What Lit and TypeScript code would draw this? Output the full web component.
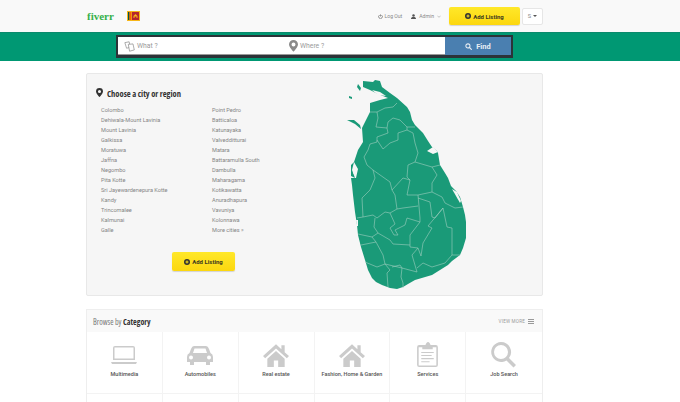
import { LitElement, html, css, svg } from 'lit';
import { customElement } from 'lit/decorators.js';

const left = ['Colombo', 'Dehiwala-Mount Lavinia', 'Mount Lavinia', 'Galkissa', 'Moratuwa', 'Jaffna', 'Negombo', 'Pita Kotte', 'Sri Jayewardenepura Kotte', 'Kandy', 'Trincomalee', 'Kalmunai', 'Galle'];
const right = ['Point Pedro', 'Batticaloa', 'Katunayaka', 'Valvedditturai', 'Matara', 'Battaramulla South', 'Dambulla', 'Maharagama', 'Kotikawatta', 'Anuradhapura', 'Vavuniya', 'Kolonnawa', 'More cities »'];

const house = svg`<path d="M12 2 L0 13 L2 15 L12 6 L22 15 L24 13 L20 9.5 V3 H17 V6.6 Z M4 15.5 V23 H10 V17 H14 V23 H20 V15.5 L12 8.2 Z"/>`;

const icons: Record<string, unknown> = {
  laptop: svg`<path fill-rule="evenodd" d="M4 2 H22 Q24 2 24 4 V16 H2 V4 Q2 2 4 2 Z M3.5 3.5 V14.5 H22.5 V3.5 Z M0 18 H26 L25 20 H1 Z"/>`,
  car: svg`<path fill-rule="evenodd" d="M7 2 H19 Q21 2 22 5 L23.5 9 Q26 10 26 13 V18 H23 V21 H19 V18 H7 V21 H3 V18 H0 V13 Q0 10 2.500 9 L4 5 Q5 2 7 2 Z M7.500 4.500 L6 9 H20 L18.500 4.500 Z M4 11.500 A2 2 0 1 0 4 15.500 A2 2 0 1 0 4 11.500 Z M22 11.500 A2 2 0 1 0 22 15.500 A2 2 0 1 0 22 11.500 Z"/>`,
  house,
  clip: svg`<path fill-rule="evenodd" d="M2 3 H8 L9 1 Q10.500 -1 12 1 L13 3 H18 Q20 3 20 5 V22 Q20 24 18 24 H2 Q0 24 0 22 V5 Q0 3 2 3 Z M1.500 5 V22.500 H18.500 V5 H15 V7 H5 V5 Z M4 9.500 H16 V10.500 H4 Z M4 12.500 H14 V13.500 H4 Z M4 15.500 H16 V16.500 H4 Z M4 18.500 H12 V19.500 H4 Z"/>`,
  search: svg`<path fill-rule="evenodd" d="M10 0 A10 10 0 0 1 18 16 L25 23 L22.500 25.500 L15.500 18.500 A10 10 0 1 1 10 0 Z M10 3 A7 7 0 1 0 10 17 A7 7 0 1 0 10 3 Z"/>`,
};

const cats = [
  { n: 'Multimedia', i: 'laptop', w: 26, vb: '0 0 26 22' },
  { n: 'Automobiles', i: 'car', w: 26, vb: '0 0 26 22' },
  { n: 'Real estate', i: 'house', w: 26, vb: '0 0 24 24' },
  { n: 'Fashion, Home & Garden', i: 'house', w: 26, vb: '0 0 24 24' },
  { n: 'Services', i: 'clip', w: 21, vb: '0 0 20 25' },
  { n: 'Job Search', i: 'search', w: 26, vb: '0 0 26 26' },
];

const borders = [
  'M370 112 377 112 385 108 393 107 397 103',
  'M377 112 378 118 376 127 387 128 388 122 393 118 400 120 407 127 415 127',
  'M387 128 388 133 377 137 377 142 370 144',
  'M377 140 383 149 390 143 398 140 398 133 407 130 407 127',
  'M407 130 413 133 415 143 418 153 415 162 408 165 407 177 410 180 408 190 407 195',
  'M370 144 368 150 364 157 367 165 373 170 390 182 392 190 395 195 397 209',
  'M373 170 375 178 370 190 362 198 363 217 357 218',
  'M415 162 432 167 440 165',
  'M432 167 437 175 432 183 432 192',
  'M392 190 403 178 410 180',
  'M363 217 373 215 377 218 385 212 390 213 397 209 403 208 418 206',
  'M407 195 418 195 432 192 442 197 445 203 455 208 463 207',
  'M418 195 420 218 420 222 410 235 410 247 418 248 421 256 423 243 432 228 428 226 443 208 447 227 452 228 452 255 460 255',
  'M418 198 430 202 432 217 435 218 443 208',
  'M420 222 407 218 405 225 395 230 398 235 394 235 390 228 395 224 390 213',
  'M375 218 374 227 378 233 390 240 393 244 410 245',
  'M358 234 372 237 378 233',
  'M361 245 376 242 372 237',
  'M376 242 383 255 385 264 402 268 417 272 412 255 418 248',
  'M417 268 423 263 432 267 445 263 452 255',
  'M365 262 377 267 385 264 390 270 387 273 388 287',
  'M392 267 400 265 402 268 401 277 403 283 403 288',
];

const mapShape = svg`
  <path class="land" d="M363 81 373 82 375 80 380 81 382 87 390 93 397 98 407 107 410 112 412 120 415 125 423 133 428 141 432 147 437 151 438 153 440 165 445 173 448 178 451 186 456 191 460 197 463 207 465 215 466 222 466 238 463 248 460 255 452 261 448 265 440 270 432 275 415 280 408 284 403 287 397 289 390 288 382 285 376 282 372 278 368 270 365 260 361 247 358 235 357 225 355 212 353 195 352 185 351 178 356 178 358 169 354 162 358 150 363 142 362 128 366 120 370 112 370 103 380 100 388 98 378 94 370 90 363 87Z"/>
  <path class="land" d="M349 96 352 97 352 99 349 98Z M358 84 361 88 360 91 357 87Z M347 120 354 120 360 125 361 129 355 124Z M351 165 354 162 352 170 355 178 351 176Z"/>
  <path class="gap" d="M353 173 355 165 356 176Z"/>
  <path class="gap" d="M372 90 380 92 386 96 378 95Z"/>
  <path class="gap" d="M427 151 433 147 438 152 433 154Z"/>
  <path class="gap" d="M452 189 457 192 461 201 460 203 456 196Z"/>
  <path class="gap" d="M356 220 358 220 358 226 357 226Z"/>
  ${borders.map(d => svg`<path class="line" d=${d}/>`)}
`;

@customElement('app-root')
export class AppRoot extends LitElement {
  static styles = css`
    :host {
      display: block;
      width: 680px;
      height: 402px;
      overflow: hidden;
      background: #fff;
      font-family: Roboto, "Liberation Sans", sans-serif;
      color: #666;
    }
    .top {
      height: 32px;
      background: #f9f9f9;
      display: flex;
      align-items: center;
      padding: 0 137px 0 87px;
    }
    .logo {
      font: bold 11px "Liberation Serif", serif;
      color: #35b04a;
    }
    .flag { margin-left: 13px; }
    .spacer { flex: 1; }
    .nav {
      display: flex;
      align-items: center;
      gap: 2px;
      font-size: 5.100px;
      color: #888;
    }
    .admin { margin-left: 9px; gap: 3px; }
    .add {
      display: flex;
      align-items: center;
      justify-content: center;
      gap: 2px;
      background: linear-gradient(#ffe82a, #fcd70f);
      border-radius: 2px;
      box-shadow: 0 1px 1px rgba(0, 0, 0, .15);
      font-size: 6px;
      font-weight: 700;
      color: #3c3a20;
    }
    .top .add { width: 71px; height: 18px; margin-left: 8px; }
    .sel {
      width: 19px;
      height: 15px;
      margin-left: 2px;
      background: #fff;
      border: 1px solid #e6e6e6;
      border-radius: 2px;
      font-size: 5.600px;
      color: #888;
      display: flex;
      align-items: center;
      justify-content: center;
      gap: 2px;
    }
    .band {
      height: 29px;
      background: #009873;
      padding-top: 2px;
      box-sizing: border-box;
      border-top: 1px solid #0a8a6c;
    }
    .search {
      width: 397px;
      height: 23px;
      margin-left: 116px;
      box-sizing: border-box;
      border: 2px solid #2c3338;
      border-bottom-width: 3px;
      display: flex;
      background: #fff;
      box-shadow: inset 0 -1px 0 #999;
      font-size: 6.800px;
      color: #999;
    }
    .field { display: flex; align-items: center; gap: 1px; }
    .what { width: 171px; padding-left: 6px; box-sizing: border-box; }
    .where { flex: 1; gap: 2px; }
    .find {
      width: 66px;
      background: #4a7fb0;
      color: #e8eef4;
      font-weight: 700;
      font-size: 7.500px;
      display: flex;
      align-items: center;
      justify-content: center;
      gap: 4px;
    }
    .wrap { width: 457px; margin: 12px 0 0 86px; }
    .panel {
      height: 223px;
      box-sizing: border-box;
      background: #f6f6f6;
      border: 1px solid #e8e8e8;
      border-radius: 2px;
      display: flex;
    }
    .choose { width: 253px; padding: 13px 0 0 9px; box-sizing: border-box; }
    .title {
      display: flex;
      align-items: center;
      gap: 4px;
      font: 700 8.500px "Open Sans", sans-serif;
      font-stretch: 75%;
      color: #333;
      height: 12px;
    }
    .cols {
      display: grid;
      grid-template-columns: 111px 1fr;
      padding: 6px 0 0 5px;
      font-size: 5.600px;
      line-height: 10px;
      color: #858585;
    }
    .panel .add { width: 63px; height: 19px; margin: 17px 0 0 76px; }
    .map { display: block; margin-top: 4px; }
    .land { fill: #1a9a78; }
    .gap { fill: #f6f6f6; }
    .line { fill: none; stroke: #9fcfc0; stroke-width: .6; }
    .cat {
      margin-top: 13px;
      border: 1px solid #eee;
      border-bottom: 0;
    }
    .head {
      height: 22px;
      background: #f9f9f9;
      display: flex;
      align-items: center;
      justify-content: space-between;
      padding: 0 8px 0 6px;
      font: 8px "Open Sans", sans-serif;
      font-stretch: 75%;
      color: #777;
    }
    .head b { color: #333; }
    .more {
      display: flex;
      align-items: center;
      gap: 3px;
      font: 4.600px Roboto, sans-serif;
      letter-spacing: .2px;
      color: #999;
    }
    .grid { display: grid; grid-template-columns: repeat(6, 1fr); }
    .cell {
      height: 62px;
      box-sizing: border-box;
      border-right: 1px solid #f3f3f3;
      border-bottom: 1px solid #f3f3f3;
      display: flex;
      flex-direction: column;
      align-items: center;
      padding-top: 10px;
      font-size: 5.500px;
      font-weight: 500;
      color: #555;
    }
    .cell:nth-child(6n) { border-right: 0; }
    .cell svg { height: 26px; fill: #cbcbcb; margin-bottom: 3px; }
  `;

  private plus() {
    return html`<svg width="6" height="6" viewBox="0 0 12 12"><circle cx="6" cy="6" r="6" fill="#333"/><path d="M6 3v6M3 6h6" stroke="#ffe21a" stroke-width="2"/></svg>`;
  }

  private pin(size: number, color: string) {
    return html`<svg width=${size} height=${size * 1.3} viewBox="0 0 10 13"><path fill=${color} fill-rule="evenodd" d="M5 0a5 5 0 0 1 5 5c0 3-5 8-5 8S0 8 0 5a5 5 0 0 1 5-5zm0 2.800a2.200 2.200 0 1 0 0 4.400 2.200 2.200 0 0 0 0-4.400z"/></svg>`;
  }

  render() {
    return html`
      <div class="top">
        <span class="logo">fiverr</span>
        <svg class="flag" width="13" height="10" viewBox="0 0 13 10">
          <rect width="13" height="10" fill="#f7b718"/>
          <rect x="1" y="1" width="1.500" height="8" fill="#00534e"/>
          <rect x="2.500" y="1" width="1.500" height="8" fill="#ff5b00"/>
          <rect x="4.800" y="1" width="7.200" height="8" fill="#b5252e"/>
          <path d="M6.500 7V5l2-2 2 2v2h-1V5.500h-2V7z" fill="#f7b718"/>
        </svg>
        <span class="spacer"></span>
        <span class="nav">
          <svg width="5" height="5" viewBox="0 0 12 12"><path d="M4 2.500a4.500 4.500 0 1 0 4 0M6 1v5" fill="none" stroke="#555" stroke-width="1.500"/></svg>
          Log Out
        </span>
        <span class="nav admin">
          <svg width="5" height="5" viewBox="0 0 12 12"><circle cx="6" cy="3.500" r="3" fill="#555"/><path d="M0 12c0-4 2-5 6-5s6 1 6 5z" fill="#555"/></svg>
          Admin
          <svg width="4" height="3" viewBox="0 0 10 6"><path d="M1 1l4 4 4-4" fill="none" stroke="#777"/></svg>
        </span>
        <div class="add">${this.plus()} Add Listing</div>
        <div class="sel">S <svg width="4" height="2" viewBox="0 0 8 4"><path d="M0 0h8L4 4z" fill="#555"/></svg></div>
      </div>
      <div class="band">
        <div class="search">
          <div class="field what">
            <svg width="12" height="11" viewBox="0 0 14 12" fill="#fff" stroke="#777" stroke-width=".7"><path d="M1 1.500 6 .5 7.500 7 3 8Z"/><path d="M5 3.500 10.500 3 12 10 6.500 11.500Z"/></svg>
            What ?
          </div>
          <div class="field where">${this.pin(9, '#8a8a8a')} Where ?</div>
          <div class="find">
            <svg width="7" height="7" viewBox="0 0 12 12"><circle cx="5" cy="5" r="3.500" fill="none" stroke="#e8eef4" stroke-width="1.800"/><path d="M8 8l3.500 3.500" stroke="#e8eef4" stroke-width="2"/></svg>
            Find
          </div>
        </div>
      </div>
      <div class="wrap">
        <div class="panel">
          <div class="choose">
            <div class="title">${this.pin(7, '#333')} Choose a city or region</div>
            <div class="cols">
              <div>${left.map(c => html`<div>${c}</div>`)}</div>
              <div>${right.map(c => html`<div>${c}</div>`)}</div>
            </div>
            <div class="add">${this.plus()} Add Listing</div>
          </div>
          <svg class="map" width="135" height="215" viewBox="340 78 135 215">${mapShape}</svg>
        </div>
        <div class="cat">
          <div class="head">
            <span>Browse by <b>Category</b></span>
            <span class="more">VIEW MORE
              <svg width="6" height="5" viewBox="0 0 6 5"><path d="M0 .5h6M0 2.500h6M0 4.500h6" stroke="#999"/></svg>
            </span>
          </div>
          <div class="grid">
            ${cats.map(c => html`
              <div class="cell">
                <svg width=${c.w} viewBox=${c.vb}>${icons[c.i]}</svg>
                ${c.n}
              </div>`)}
            ${cats.map(() => html`<div class="cell"></div>`)}
          </div>
        </div>
      </div>
    `;
  }
}
